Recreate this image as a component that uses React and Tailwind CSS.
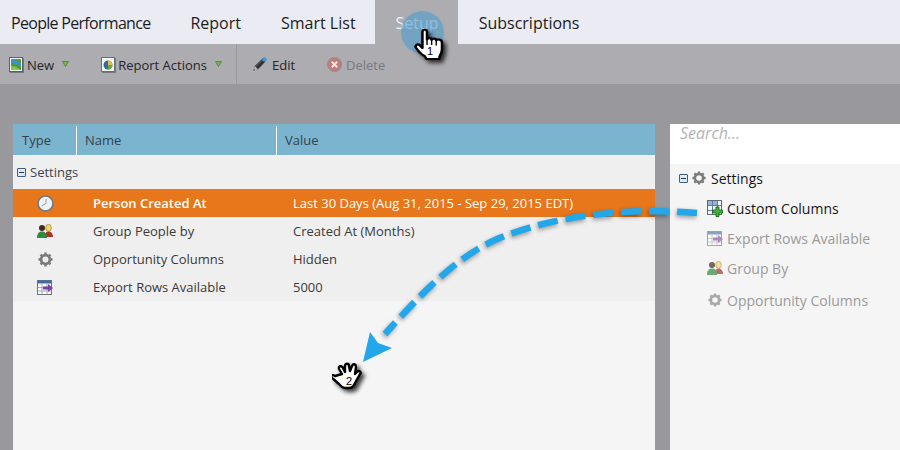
import React from 'react';

const font = { fontFamily: '"Open Sans", sans-serif' };

const arrowPath = 'M697 213C640 208 560 212 495 240 455 258 420 295 385 334';

// --- small icons ---
const Triangle = ({ className }) => (
  <svg width="7" height="6" viewBox="0 0 7 6" className={className}>
    <path d="M0.5 0.5H6.500L3.500 5.500Z" fill="#6fb84a" stroke="#3f7d2a" strokeWidth="0.700" />
  </svg>
);

const NewIcon = () => (
  <svg width="14" height="15" viewBox="0 0 14 15" className="drop-shadow-[1px_1px_0_rgba(0,0,0,0.3)]">
    <rect x="0.5" y="0.5" width="13" height="14" fill="#f4f6f8" stroke="#56606a" />
    <rect x="2" y="2" width="10" height="11" fill="#4f9a3c" />
    <path d="M2 2h3l7 5v2L7 7 2 5z" fill="#3f8fd8" />
    <path d="M2 9l5 1 5 3H2z" fill="#7ccb4c" />
  </svg>
);

const ReportIcon = () => (
  <svg width="14" height="15" viewBox="0 0 14 15" className="drop-shadow-[1px_1px_0_rgba(0,0,0,0.3)]">
    <rect x="0.5" y="0.5" width="13" height="14" fill="#f4f6f8" stroke="#68727c" />
    <circle cx="7" cy="8" r="4.5" fill="#2f6d9c" />
    <path d="M7 8V3.5A4.5 4.5 0 0 1 11.5 8z" fill="#e2c33f" />
    <path d="M7 8h4.5A4.5 4.5 0 0 1 7 12.500z" fill="#6aa84a" />
  </svg>
);

const PencilIcon = () => (
  <svg width="14" height="14" viewBox="0 0 14 14">
    <path d="M0.500 13.500L1.800 9 9.500 1.500 12.500 4.500 5 12.200Z" fill="#303034" />
    <path d="M0.500 13.500L1.800 9 5 12.200Z" fill="#b9b9bd" />
    <path d="M0.500 13.500L1 12 2 13Z" fill="#222" />
    <path d="M3 9.500L9.500 3" stroke="#77777c" strokeWidth="0.800" />
    <circle cx="11.500" cy="2.500" r="2.200" fill="#3f97d9" />
  </svg>
);

const DeleteIcon = () => (
  <svg width="15" height="15" viewBox="0 0 15 15">
    <circle cx="7.500" cy="7.500" r="7" fill="#c47a78" stroke="#8f8f92" />
    <path d="M4.800 4.800l5.400 5.400M10.200 4.800l-5.400 5.400" stroke="#e8e8e8" strokeWidth="2" />
  </svg>
);

const ClockIcon = () => (
  <svg width="17" height="17" viewBox="0 0 17 17">
    <circle cx="8.500" cy="8.500" r="7.500" fill="#eef1f5" stroke="#6f7882" strokeWidth="1.600" />
    <path d="M9 4v4.500L4.500 11" stroke="#8a929b" strokeWidth="0.900" fill="none" />
  </svg>
);

const PeopleIcon = () => (
  <svg width="16" height="14" viewBox="0 0 16 14">
    <ellipse cx="11.500" cy="3.800" rx="2.800" ry="3.500" fill="#f2d873" stroke="#a58a2c" strokeWidth="0.800" />
    <path d="M8 13c0-3.500 1-5.500 3.500-5.500s4.500 2 4.500 5.500z" fill="#a8322c" />
    <circle cx="5" cy="4" r="3" fill="#3f2c20" />
    <path d="M0 14c0-4 1.500-6.500 5-6.500S10 10 10 14z" fill="#2f8a3e" />
  </svg>
);

const GearIcon = ({ color = '#7b7b7b', size = 15 }) => (
  <svg width={size} height={size} viewBox="0 0 16 16">
    <circle cx="8" cy="8" r="4.700" fill="none" stroke={color} strokeWidth="3" />
    <path
      d="M8 0.500v3M8 12.500v3M0.500 8h3M12.500 8h3M2.700 2.700l2.100 2.100M11.200 11.200l2.100 2.100M13.300 2.700l-2.100 2.100M4.800 11.200l-2.100 2.100"
      stroke={color}
      strokeWidth="2.600"
    />
  </svg>
);

const ExportIcon = ({ faded }) => (
  <svg width="16" height="15" viewBox="0 0 16 15" opacity={faded ? 0.6 : 1}>
    <rect x="0.500" y="0.500" width="14" height="14" fill="#fff" stroke="#6d7680" />
    <rect x="0.500" y="0.500" width="14" height="3" fill="#3f6d9c" />
    <path d="M5 4v10M10 4v10M1 7.500h13M1 11h13" stroke="#a4abb2" />
    <path d="M6 6.500h5V4l5 4-5 4V9.500H6z" fill="#7c3fa8" />
  </svg>
);

const CustomColumnsIcon = () => (
  <svg width="16" height="17" viewBox="0 0 16 17">
    <rect x="0.500" y="0.500" width="14" height="14" fill="#f4f7fa" stroke="#5f6b76" />
    <rect x="1" y="1" width="4" height="4" fill="#8fb4d8" />
    <rect x="6" y="1" width="4" height="4" fill="#8fb4d8" />
    <path d="M5.500 1v13M10.500 1v13M1 5.500h13M1 10.500h13" stroke="#5f7fa0" />
    <path d="M9 7h3v3h3.500v3H12v3.500H9V13H5.500v-3H9z" fill="#46b03a" stroke="#14591a" strokeWidth="0.800" />
  </svg>
);

const Minus = () => (
  <span className="flex h-[9px] w-[9px] items-center justify-center rounded-[1px] border border-[#3f5f80] bg-[#dde8f2]">
    <span className="h-px w-[5px] bg-[#1f3b57]" />
  </span>
);

// --- hand cursors with step number on top ---
const PointerHand = () => (
  <div className="absolute left-[412px] top-[27px]">
    <svg width="34" height="40" viewBox="0 0 34 40" className="drop-shadow-[3px_3px_2px_rgba(0,0,0,0.75)]">
      <g transform="translate(-0.500 0) scale(1.150 1)">
        <path
          d="M9.500 21V5c0-3 4-3 4 0v7.500c.5-2 4-2 4 .5 .5-2 4-2 4 .5 .5-1.500 5-1.500 5 2v7c0 3-1 5-2 7l-.5 2.500H13l-1.500-3C9 28 6 24 4 21c-1.500-2.500 1-4.500 3-3z"
          fill="#fff"
          stroke="#000"
          strokeWidth="2.200"
          strokeLinejoin="round"
        />
        <path d="M13.500 13v5M17.500 13v5M21.500 13.500v5" stroke="#000" strokeWidth="1.200" />
      </g>
    </svg>
    <span className="absolute left-[15px] top-[19px] text-[11px] leading-none text-black" style={{ fontFamily: '"Liberation Sans", sans-serif' }}>1</span>
  </div>
);

const OpenHand = () => (
  <div className="absolute left-[332px] top-[360px]">
    <svg width="34" height="34" viewBox="0 0 34 34" className="drop-shadow-[3px_3px_2px_rgba(0,0,0,0.75)]">
      <path
        d="M10 14L7 9c-1-3 3-4 4-1l2 4L13 6c0-3 4-3 4 0l1 5 2-5c1-3 4-2 4 1l-1 7 2-2c2-2 5 0 3 2l-5 9c-1 3-3 5-6 5h-4c-3 0-4-2-6-4l-7-6c-2-2 0-4 3-2z"
        fill="#fff"
        stroke="#000"
        strokeWidth="2.400"
        strokeLinejoin="round"
      />
    </svg>
    <span className="absolute left-[14px] top-[16px] text-[11px] leading-none text-black" style={{ fontFamily: '"Liberation Sans", sans-serif' }}>2</span>
  </div>
);

const tabs = [
  { name: 'People Performance', cls: 'pl-[11px] pr-[20px] tracking-[-0.7px]' },
  { name: 'Report', cls: 'px-5' },
  { name: 'Smart List', cls: 'px-5' },
  { name: 'Setup', cls: '-ml-px pl-[21px] pr-[19px] bg-[#adacb0] text-[#eef2f6]' },
  { name: 'Subscriptions', cls: 'pl-[21px] pr-5' },
];

const rows = [
  { icon: <ClockIcon />, name: 'Person Created At', value: 'Last 30 Days (Aug 31, 2015 - Sep 29, 2015 EDT)', active: true },
  { icon: <PeopleIcon />, name: 'Group People by', value: 'Created At (Months)' },
  { icon: <GearIcon />, name: 'Opportunity Columns', value: 'Hidden' },
  { icon: <ExportIcon />, name: 'Export Rows Available', value: '5000' },
];

export default function App() {
  return (
    <div className="relative h-[450px] w-[900px] overflow-hidden bg-[#99989d]" style={font}>
      {/* Tabs */}
      <div className="flex h-[44px] items-stretch bg-[#ebebf3] text-[16px] text-[#1c1c1c]">
        {tabs.map((t) => (
          <div key={t.name} className={`flex items-center pt-[2px] ${t.cls}`}>{t.name}</div>
        ))}
      </div>

      {/* Toolbar */}
      <div className="flex h-[40px] items-center bg-[#adacb0] text-[13px] text-[#26262a]">
        <div className="flex h-full items-center border-r border-[#9c9ba0] pl-[9px] pr-[14px]">
          <NewIcon />
          <span className="ml-[4px] pt-[3px]">New</span>
          <Triangle className="ml-[8px]" />
          <span className="ml-[32px]"><ReportIcon /></span>
          <span className="ml-[3px] pt-[3px]">Report Actions</span>
          <Triangle className="ml-[8px]" />
        </div>
        <div className="ml-[16px] flex items-center gap-[5px]">
          <PencilIcon />
          <span className="pt-[3px]">Edit</span>
        </div>
        <div className="ml-[32px] flex items-center gap-[4px] text-[#7a797e]">
          <DeleteIcon />
          <span className="pt-[3px]">Delete</span>
        </div>
      </div>

      {/* Main area */}
      <div className="flex h-[366px] items-stretch pl-[13px] pt-[40px]">
        <div className="flex w-[642px] flex-col bg-[#f5f5f5]">
          <div className="flex h-[31px] items-center bg-[#7ab4cf] pt-[2px] text-[13px] text-[#33414c]">
            <div className="flex h-full w-[64px] items-center border-r border-white pl-[9px]">Type</div>
            <div className="flex h-full w-[200px] items-center border-r border-white pl-[8px]">Name</div>
            <div className="pl-[8px]">Value</div>
          </div>
          <div className="flex h-[34px] items-center gap-[4px] bg-[#efefef] pl-[4px] text-[13px] text-[#3c4650]">
            <Minus />
            <span className="pt-[2px]">Settings</span>
          </div>
          {rows.map((r) => (
            <div
              key={r.name}
              className={`flex h-[28px] items-center text-[13px] ${r.active ? 'bg-[#e8761a] text-white' : 'bg-[#efefef] text-[#3a3a3a]'}`}
            >
              <div className="flex w-[64px] justify-center">{r.icon}</div>
              <div className={`w-[200px] pl-[16px] pt-[2px] ${r.active ? 'font-semibold' : ''}`}>{r.name}</div>
              <div className="pl-[16px] pt-[2px]">{r.value}</div>
            </div>
          ))}
        </div>

        {/* Side panel */}
        <div className="ml-[15px] flex w-[230px] flex-col bg-[#f5f5f5]">
          <div className="h-[40px] bg-white pl-[10px] text-[16px] italic leading-[18px] text-[#b3b3b3]">Search...</div>
          <div className="-mt-px flex flex-col pl-[9px] text-[14px]">
            <div className="flex h-[30px] items-center gap-[4px] text-[#151515]">
              <Minus />
              <GearIcon size={14} />
              <span className="ml-[1px]">Settings</span>
            </div>
            <div className="flex h-[30px] items-center gap-[4px] pl-[28px] text-[#151515]">
              <CustomColumnsIcon />
              <span>Custom Columns</span>
            </div>
            <div className="flex h-[30px] items-center gap-[4px] pl-[28px] text-[#9a9a9a]">
              <ExportIcon faded />
              <span>Export Rows Available</span>
            </div>
            <div className="flex h-[30px] items-center gap-[4px] pl-[28px] text-[#9a9a9a]">
              <span className="opacity-70"><PeopleIcon /></span>
              <span>Group By</span>
            </div>
            <div className="flex h-[34px] items-center gap-[5px] pl-[29px] text-[#9a9a9a]">
              <GearIcon color="#a8a8a8" size={14} />
              <span>Opportunity Columns</span>
            </div>
          </div>
        </div>
      </div>

      {/* Tutorial overlay */}
      <div className="absolute left-[401px] top-[11px] h-[43px] w-[43px] rounded-full bg-[#4f9ccf] opacity-60" />
      <svg width="900" height="450" className="absolute left-0 top-0">
        <path
          d={arrowPath}
          fill="none"
          stroke="#000"
          strokeOpacity="0.35"
          strokeWidth="7"
          strokeDasharray="20 8"
          transform="translate(-1 2)"
          style={{ filter: 'blur(2px)' }}
        />
        <path d={arrowPath} fill="none" stroke="#22a8ea" strokeWidth="6.500" strokeDasharray="20 8" />
        <path d="M370 332L363 362 392 348 378 343Z" fill="#22a8ea" />
      </svg>
      <PointerHand />
      <OpenHand />
    </div>
  );
}
